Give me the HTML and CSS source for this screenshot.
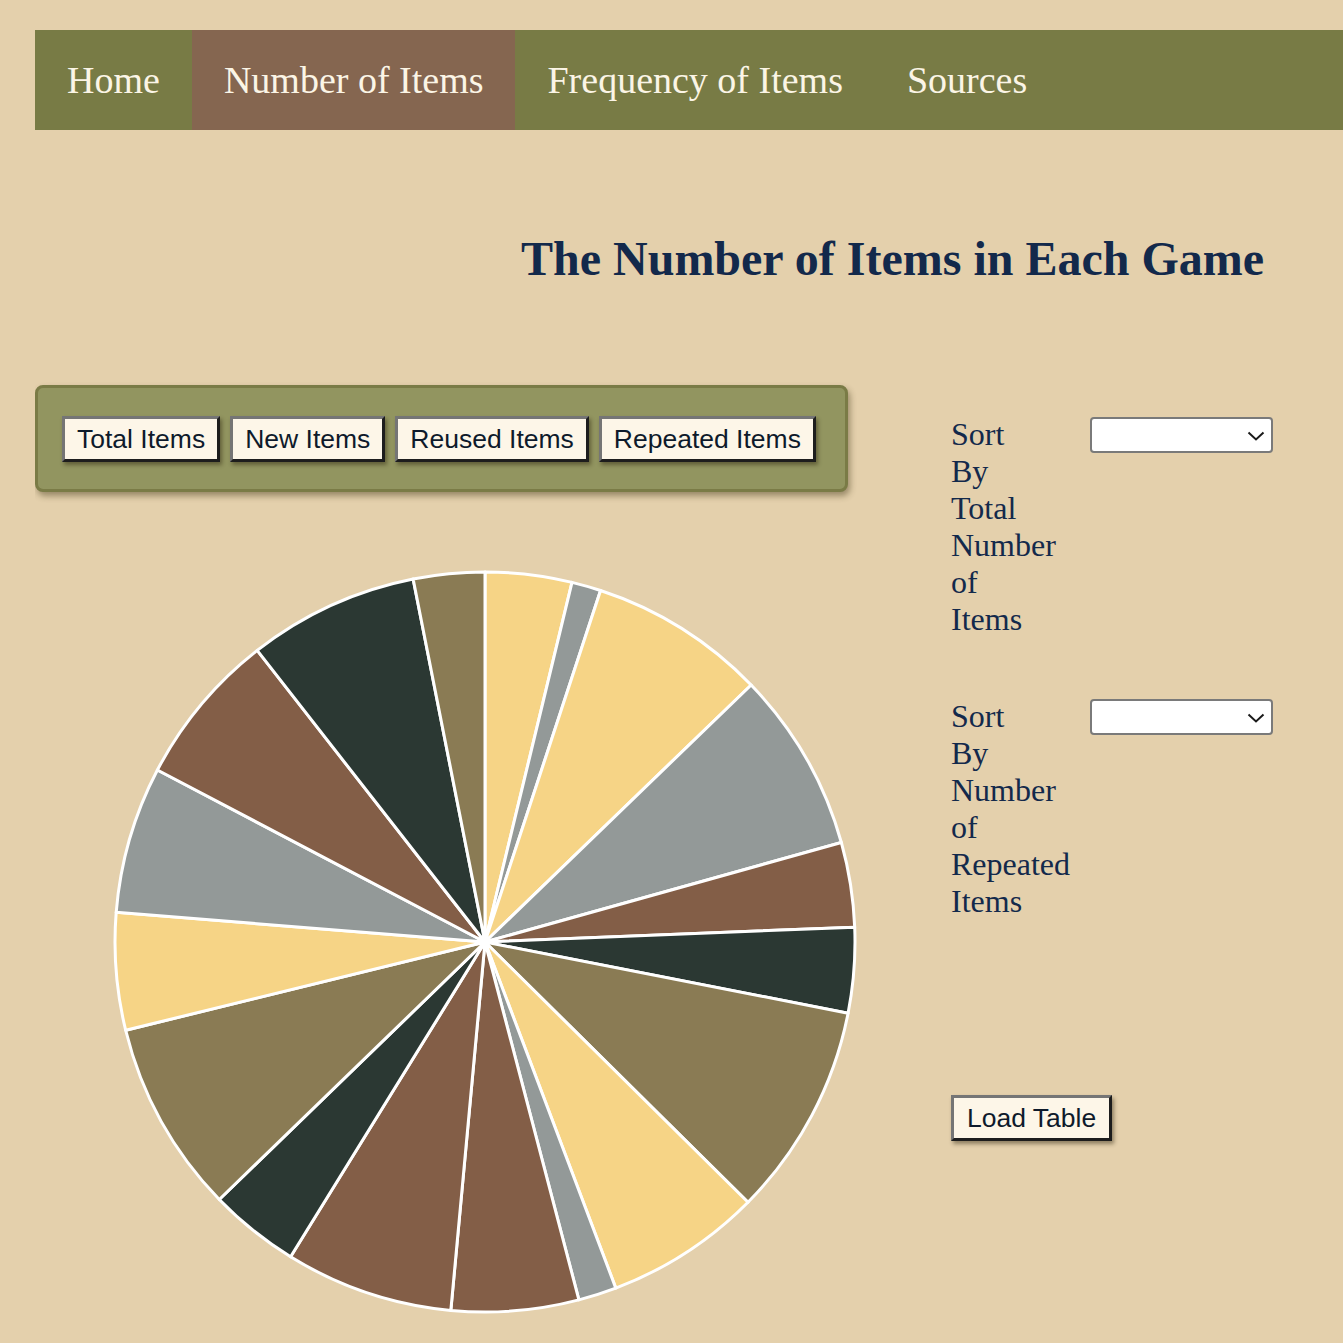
FILE: index.html
```html
<!DOCTYPE html>
<html lang="en">
<head>
<meta charset="utf-8">
<title>The Number of Items in Each Game</title>
<link rel="stylesheet" href="styles.css">
</head>
<body>
<nav class="nav">
  <a class="nav-link" href="#">Home</a>
  <a class="nav-link active" href="#">Number of Items</a>
  <a class="nav-link" href="#">Frequency of Items</a>
  <a class="nav-link" href="#">Sources</a>
</nav>

<h1 class="title">The Number of Items in Each Game</h1>

<main class="content">
  <section class="chart-col">
    <div class="btn-panel">
      <button class="btn">Total Items</button>
      <button class="btn">New Items</button>
      <button class="btn">Reused Items</button>
      <button class="btn">Repeated Items</button>
    </div>
    <svg class="pie" id="pie" width="760" height="760" viewBox="0 0 760 760"></svg>
  </section>

  <aside class="side-col">
    <div class="sort-row">
      <label class="sort-label" for="sort1">Sort By Total Number of Items</label>
      <div class="select-wrap">
        <select class="sort-select" id="sort1"><option></option></select>
        <svg class="chevron" width="18" height="10" viewBox="0 0 18 10"><path d="M1.5 1.5 L9 8.5 L16.5 1.5" fill="none" stroke="#1a1a1a" stroke-width="2"/></svg>
      </div>
    </div>
    <div class="sort-row">
      <label class="sort-label" for="sort2">Sort By Number of Repeated Items</label>
      <div class="select-wrap">
        <select class="sort-select" id="sort2"><option></option></select>
        <svg class="chevron" width="18" height="10" viewBox="0 0 18 10"><path d="M1.5 1.5 L9 8.5 L16.5 1.5" fill="none" stroke="#1a1a1a" stroke-width="2"/></svg>
      </div>
    </div>
    <button class="btn load-btn">Load Table</button>
  </aside>
</main>
<script src="script.js"></script>
</body>
</html>
```

FILE: styles.css
```css
html, body {
  background: #e4d0ac;
}
body {
  margin: 30px 0 0 35px;
  font-family: "Liberation Serif", "Times New Roman", serif;
  color: #13294b;
}
.nav {
  display: flex;
  background: #787b45;
  height: 100px;
  align-items: stretch;
}
.nav-link {
  display: flex;
  align-items: center;
  padding: 0 32px;
  font-size: 38px;
  color: #fbf5e6;
  text-decoration: none;
}
.nav-link.active {
  background: #856650;
}
.title {
  margin: 101px 0 0 486px;
  font-size: 48px;
  line-height: 55px;
  font-weight: bold;
  color: #13294b;
}
.content {
  display: flex;
  margin-top: 99px;
  align-items: flex-start;
}
.chart-col {
  width: 813px;
}
.btn-panel {
  display: flex;
  gap: 10px;
  background: #929560;
  border: 3px solid #7a7b46;
  border-radius: 8px;
  padding: 28px 20px 27px 24px;
  box-shadow: 2px 4px 6px rgba(60, 50, 20, 0.45);
}
.btn {
  font-family: "Liberation Sans", Arial, sans-serif;
  font-size: 26.5px;
  color: #0e1a2b;
  background: #fdf6e8;
  border-style: solid;
  border-width: 3px;
  border-color: #757575 #1d1d1d #1d1d1d #757575;
  padding: 6px 12px 5px;
  line-height: 29px;
  box-shadow: 2px 3px 4px rgba(40, 30, 10, 0.45);
  cursor: pointer;
}
.pie {
  display: block;
  margin: 70px 0 0 70px;
}
.side-col {
  margin-left: 103px;
  padding-top: 31px;
  display: flex;
  flex-direction: column;
  align-items: flex-start;
}
.sort-row {
  display: grid;
  grid-template-columns: 80px 183px;
  column-gap: 59px;
  align-items: start;
  margin-bottom: 60px;
}
.sort-row + .sort-row {
  margin-bottom: 175px;
}
.sort-label {
  font-size: 32px;
  line-height: 37px;
  color: #13294b;
}
.select-wrap {
  position: relative;
  width: 183px;
  height: 36px;
  margin-top: 1px;
}
.sort-select {
  appearance: none;
  -webkit-appearance: none;
  display: block;
  width: 183px;
  height: 36px;
  background: #ffffff;
  border: 2px solid #7a7a7a;
  border-radius: 4px;
  font-size: 20px;
}
.chevron {
  position: absolute;
  right: 8px;
  top: 14px;
  pointer-events: none;
}
.load-btn {
  padding: 6px 13px 5px;
}
```

FILE: script.js
```js
(function () {
  var bounds = [0, 13.6, 18.2, 46.0, 74.4, 87.7, 101.1, 134.7, 159.3, 165.3,
    185.3, 211.7, 225.9, 256.2, 274.6, 297.7, 322.0, 348.8, 360];
  var Y = "#f6d486", G = "#939998", B = "#835e47", D = "#2b3833", O = "#8a7b54";
  var colors = [Y, G, Y, G, B, D, O, Y, G, B, B, D, O, Y, G, B, D, O];
  var cx = 380, cy = 380, r = 370;
  var svg = document.getElementById("pie");
  var ns = "http://www.w3.org/2000/svg";
  function pt(a) {
    var rad = a * Math.PI / 180;
    return [cx + r * Math.sin(rad), cy - r * Math.cos(rad)];
  }
  for (var i = 0; i < colors.length; i++) {
    var a0 = bounds[i], a1 = bounds[i + 1];
    var p0 = pt(a0), p1 = pt(a1);
    var large = (a1 - a0) > 180 ? 1 : 0;
    var d = "M" + cx + "," + cy + " L" + p0[0].toFixed(2) + "," + p0[1].toFixed(2) +
      " A" + r + "," + r + " 0 " + large + " 1 " + p1[0].toFixed(2) + "," + p1[1].toFixed(2) + " Z";
    var path = document.createElementNS(ns, "path");
    path.setAttribute("d", d);
    path.setAttribute("fill", colors[i]);
    path.setAttribute("stroke", "#ffffff");
    path.setAttribute("stroke-width", "3");
    path.setAttribute("stroke-linejoin", "round");
    svg.appendChild(path);
  }
})();
```
